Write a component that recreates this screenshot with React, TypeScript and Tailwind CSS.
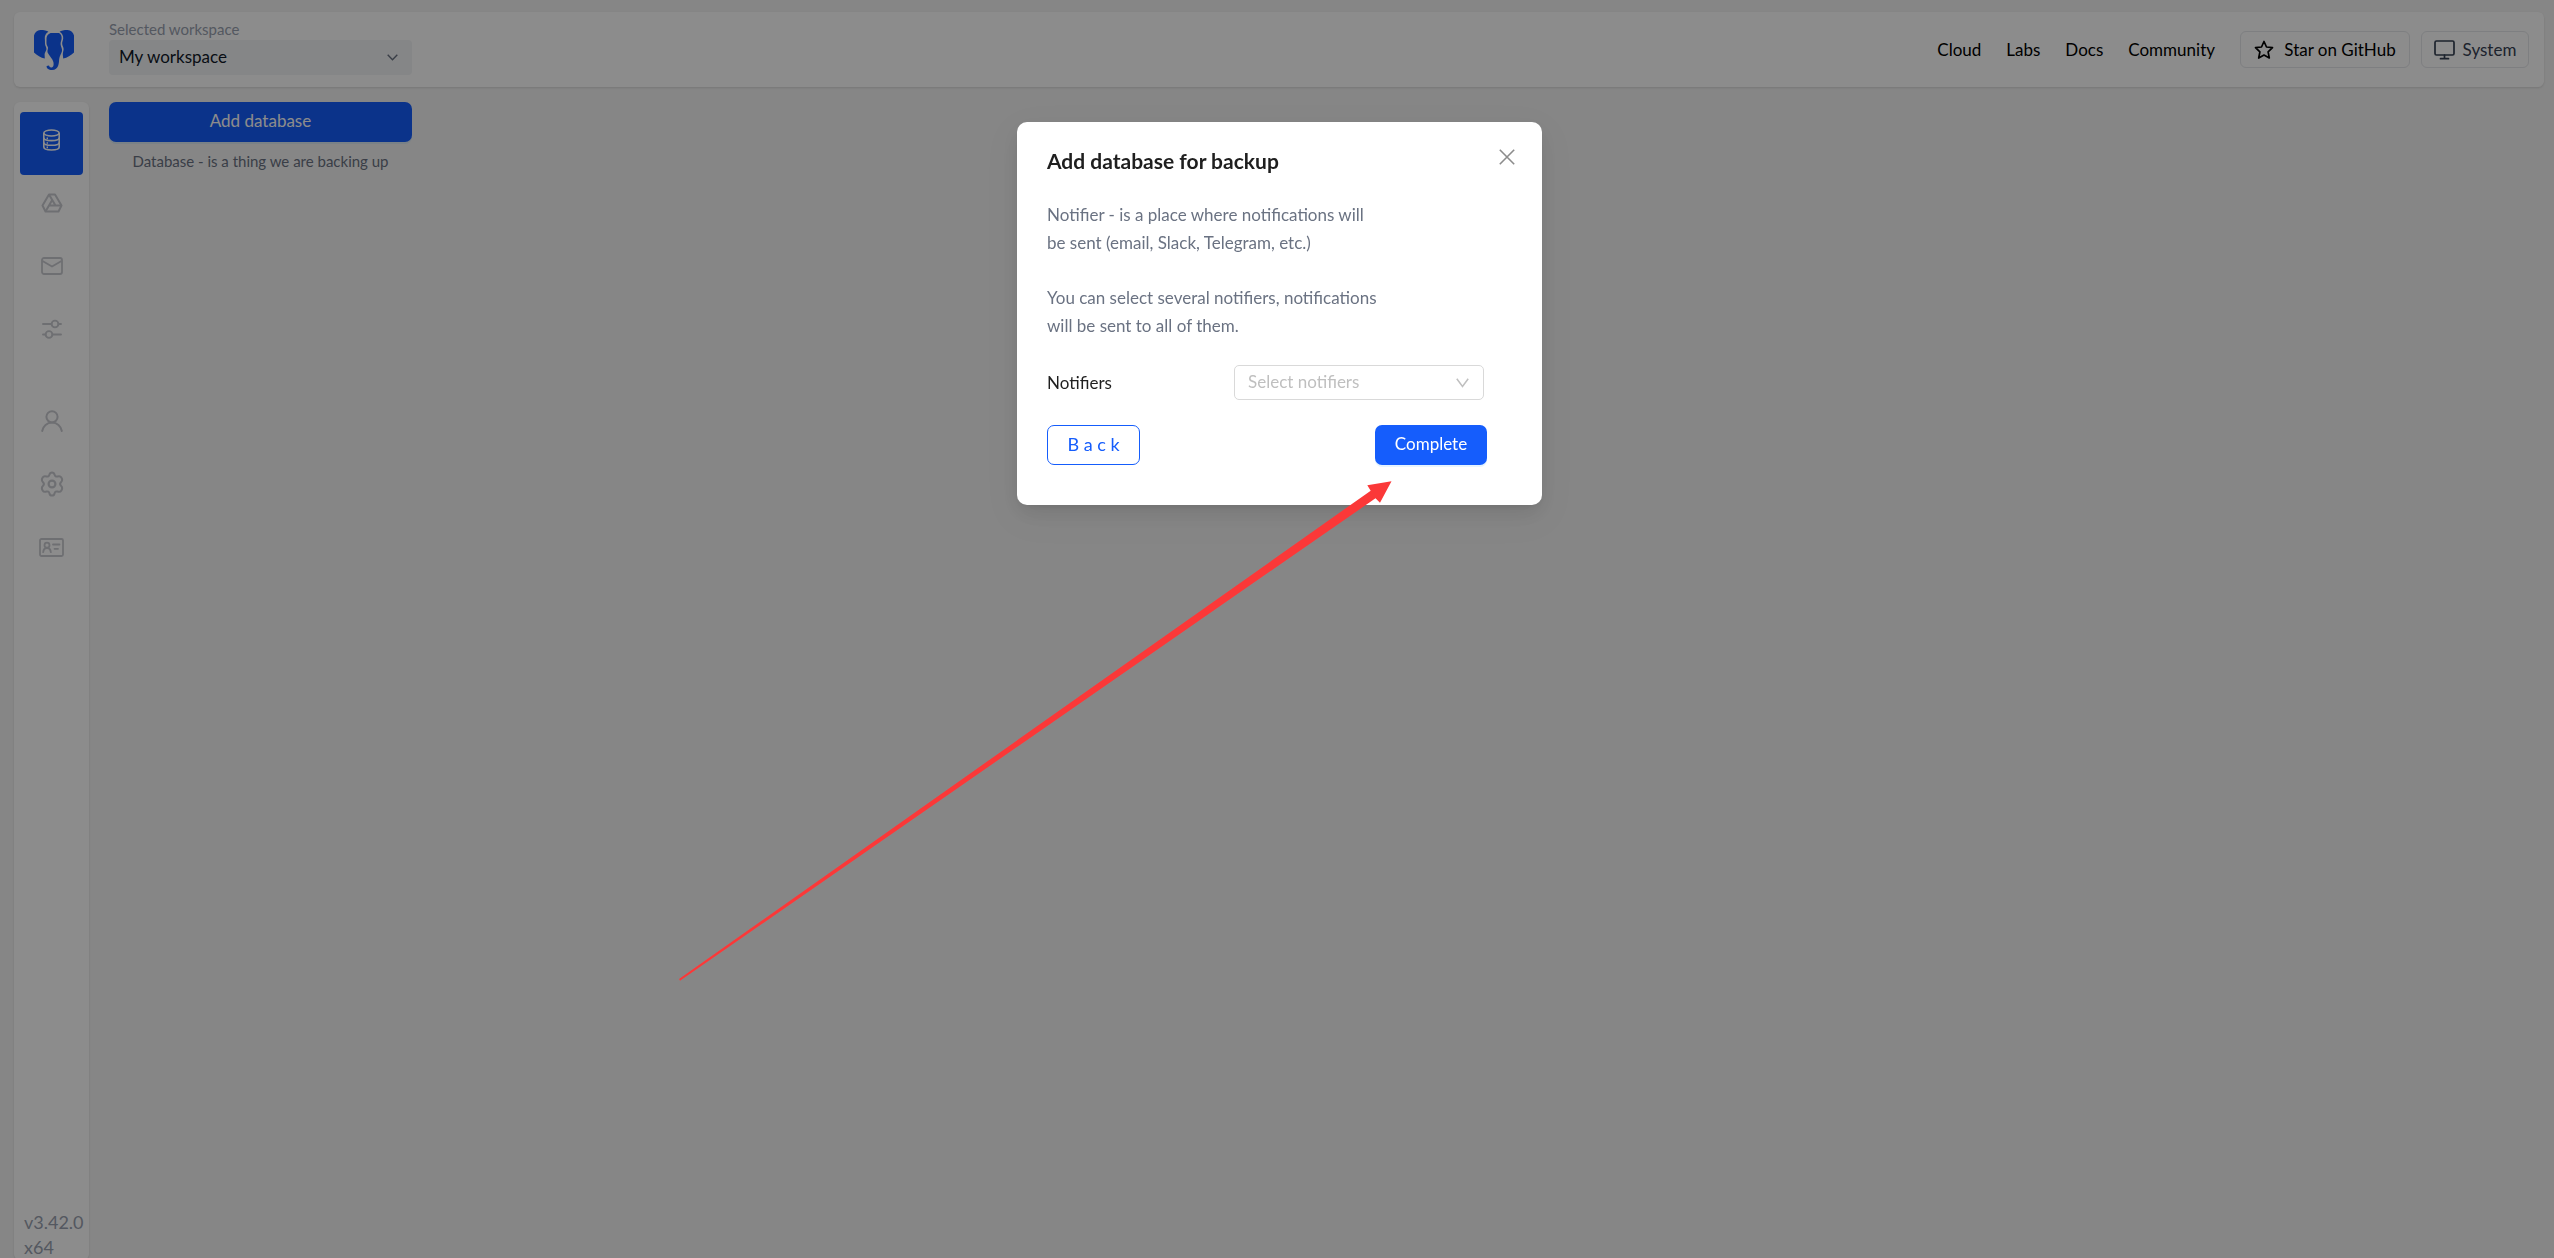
import { useState } from "react";

type IconProps = { className?: string };

function LogoIcon({ className }: IconProps) {
  return (
    <svg className={className} viewBox="0 0 40 40" fill="#155dfc">
      <path d="M6.500 0C10 0 13 .6 14.400 1.800C11.800 3.400 10.500 5.600 10.800 8.600C11 10.800 11 12 11 14C11.200 16 12.800 17.400 12.400 19.400C12 21.200 10.600 22.400 10.600 24.400L10.800 28.600C6.800 27.400 3 25.400 0 22.400V5.600C.6 2.400 3 .2 6.500 0Z" />
      <path d="M33.500 0C30 0 27 .6 25.600 1.800C28.200 3.400 29.500 5.600 29.200 8.600C29 10.800 28 12 28.200 14C28.400 16 29.800 17.400 29.600 19.400C29.400 21.200 28.800 22.400 28.800 24.400L29.200 28.600C33.200 27.400 37 25.400 40 22.400V5.600C39.400 2.400 37 .2 33.500 0Z" />
      <path d="M16.600 3H25C26.800 4.200 28 6 27.600 8.800C27.300 10.800 26.400 12.400 26.600 14.600C26.900 17 28.400 18.600 28 21C27.400 24 25.600 25.600 25.200 29C24.800 33 25 40 18 40C14.600 40 12.400 38.400 12.600 36L15 35.600C15.400 37.200 16.400 37.600 17.600 37.400C19.800 37 19.800 34.400 19.400 32C18.600 28.400 15 25.600 13.600 22.400C13 20.600 14.200 19.600 14 17.600C13.800 16 12.600 15.400 12.500 13.400C12.400 11.600 12.600 10.600 12.500 8.800C12.400 6 14 4.200 16.600 3Z" />
    </svg>
  );
}

function DatabaseIcon() {
  return (
    <svg width="21" height="22" viewBox="0 0 21 22" fill="none" stroke="white" strokeWidth="1.6">
      <ellipse cx="10.5" cy="4" rx="7.7" ry="3" />
      <path d="M2.8 4V18C2.8 19.8 6.2 21 10.5 21S18.2 19.8 18.2 18V4" />
      <path d="M2.8 8.7C2.8 10.4 6.2 11.6 10.5 11.6S18.2 10.4 18.2 8.7M2.8 13.4C2.8 15.1 6.2 16.3 10.5 16.3S18.2 15.1 18.2 13.4" />
      <path d="M5.6 9.4H7M5.6 14H7M5.6 18.4H7" />
    </svg>
  );
}

function DriveIcon() {
  return (
    <svg width="22" height="20" viewBox="0 0 22 20" fill="none" stroke="#c9cad0" strokeWidth="2" strokeLinejoin="round">
      <path d="M8 1.5H14L20.5 12.5L17.5 18.5H4.5L1.5 12.5Z" />
      <path d="M8 1.5L14.5 12.5M20.5 12.5H8.3M4.5 18.5L11.2 7" />
    </svg>
  );
}

function MailIcon() {
  return (
    <svg width="22" height="18" viewBox="0 0 22 18" fill="none" stroke="#c9cad0" strokeWidth="1.8" strokeLinejoin="round">
      <rect x="1" y="1" width="20" height="16" rx="2" />
      <path d="M1.5 4L11 9.5L20.5 4" />
    </svg>
  );
}

function SlidersIcon() {
  return (
    <svg width="20" height="20" viewBox="0 0 20 20" fill="none" stroke="#c9cad0" strokeWidth="1.9" strokeLinecap="round">
      <path d="M1 5H9.5M16.5 5H19M1 15.5H3.5M10.5 15.5H19" />
      <circle cx="13" cy="5" r="3.4" />
      <circle cx="7" cy="15.5" r="3.4" />
    </svg>
  );
}

function UserIcon() {
  return (
    <svg width="22" height="22" viewBox="0 0 22 22" fill="none" stroke="#c9cad0" strokeWidth="2" strokeLinecap="round">
      <circle cx="11" cy="6.8" r="5.6" />
      <path d="M1.2 21C2 16 6 12.6 11 12.6S20 16 20.8 21" />
    </svg>
  );
}

function GearIcon() {
  return (
    <svg width="24" height="26" viewBox="0 0 24 26" fill="none" stroke="#c9cad0" strokeWidth="2" strokeLinejoin="round">
      <path d="M12 1.4C13.8 1.4 14.3 2.4 14.6 3.8C14.9 5.2 16.2 5.9 17.5 5.5C19 5 20.4 4.900 21.4 6.6C22.900 9 22.400 9.900 21 11.200C19.900 12.300 19.900 13.700 21 14.800C22.400 16.100 22.900 17 21.400 19.400C20.400 21.100 19 21 17.500 20.500C16.200 20.100 14.900 20.800 14.600 22.200C14.300 23.600 13.800 24.600 12 24.600S9.700 23.600 9.400 22.200C9.100 20.800 7.800 20.100 6.500 20.500C5 21 3.600 21.100 2.600 19.400C1.100 17 1.600 16.100 3 14.800C4.100 13.700 4.100 12.300 3 11.200C1.600 9.900 1.100 9 2.600 6.600C3.600 4.900 5 5 6.500 5.500C7.800 5.900 9.100 5.200 9.400 3.800C9.700 2.400 10.200 1.400 12 1.400Z" />
      <circle cx="12" cy="13" r="3.400" strokeWidth="2.200" />
    </svg>
  );
}

function IdCardIcon() {
  return (
    <svg width="25" height="19" viewBox="0 0 25 19" fill="none" stroke="#c9cad0" strokeWidth="1.800" strokeLinecap="round">
      <rect x="1" y="1" width="23" height="17" rx="1.5" />
      <circle cx="8" cy="7.2" r="2.500" />
      <path d="M4.200 14.200C4.400 11.700 6 10 8 10S11.600 11.700 11.800 14.200M14 6.500H20.500M15.500 10.800H19" />
    </svg>
  );
}

const mainTabs = [
  { name: "Databases", icon: <DatabaseIcon />, active: true },
  { name: "Storages", icon: <DriveIcon /> },
  { name: "Notifiers", icon: <MailIcon /> },
  { name: "Settings", icon: <SlidersIcon /> },
];

const adminTabs = [
  { name: "Profile", icon: <UserIcon /> },
  { name: "Global settings", icon: <GearIcon /> },
  { name: "Users", icon: <IdCardIcon /> },
];

const links = ["Cloud", "Labs", "Docs", "Community"];

function TabButton({ tab }: { tab: { name: string; icon: React.ReactNode; active?: boolean } }) {
  return (
    <button
      aria-label={tab.name}
      className={`flex h-[63px] w-[63px] items-center justify-center rounded pb-[7px] ${
        tab.active ? "bg-[#155dfc]" : ""
      }`}
    >
      {tab.icon}
    </button>
  );
}

function Header() {
  return (
    <header className="flex h-[75px] items-center rounded-md bg-white pr-[15px] pl-5 shadow-sm">
      <a href="#" aria-label="Home">
        <LogoIcon className="h-10 w-10" />
      </a>
      <div className="ml-[35px] w-[303px]">
        <label htmlFor="workspace" className="block text-[15px] leading-[18px] text-gray-400">
          Selected workspace
        </label>
        <div className="relative mt-[2px] mb-1">
          <select
            id="workspace"
            className="block h-[35px] w-full appearance-none rounded bg-gray-100 px-[10px] pb-[2px] text-[17px] text-gray-900"
          >
            <option>My workspace</option>
          </select>
          <svg
            className="pointer-events-none absolute top-[14px] right-[14px]"
            width="11"
            height="7"
            viewBox="0 0 11 7"
            fill="none"
            stroke="#6a7282"
            strokeWidth="1.4"
          >
            <path d="M.7 .7L5.500 5.700L10.300 .7" />
          </svg>
        </div>
      </div>

      <nav className="ml-auto flex items-center gap-[25px] text-[17px] text-black">
        {links.map((link) => (
          <a key={link} href="#">
            {link}
          </a>
        ))}
        <a
          href="#"
          className="flex h-[37px] w-[170px] items-center justify-center gap-[10px] rounded-md border border-gray-200"
        >
          <svg width="20" height="20" viewBox="0 0 20 20" fill="none" stroke="black" strokeWidth="1.7" strokeLinejoin="round">
            <path d="M10 1.500L12.500 7L18.500 7.700L14.100 11.800L15.300 18L10 15L4.700 18L5.900 11.800L1.500 7.700L7.500 7Z" />
          </svg>
          Star on GitHub
        </a>
      </nav>
      <button className="ml-[11px] flex h-[37px] w-[108px] items-center justify-center gap-2 rounded-md border border-gray-200 text-[17px] text-[#364153]">
        <svg width="21" height="20" viewBox="0 0 21 20" fill="none" stroke="#364153" strokeWidth="1.7" strokeLinecap="round">
          <rect x="1" y="1" width="19" height="14" rx="1.500" />
          <path d="M10.500 15V18.500M6.500 18.700H14.500" />
        </svg>
        System
      </button>
    </header>
  );
}

function BackupModal({ onClose }: { onClose: () => void }) {
  return (
    <div className="fixed inset-0 flex items-start justify-center bg-black/45 pt-[122px] pl-[5px]">
      <div
        role="dialog"
        aria-labelledby="modal-title"
        className="relative w-[525px] rounded-[10px] bg-white px-[30px] pt-6 pb-10 shadow-[0_8px_20px_rgba(0,0,0,0.08),0_4px_8px_-5px_rgba(0,0,0,0.12),0_11px_35px_10px_rgba(0,0,0,0.05)]"
      >
        <h2 id="modal-title" className="text-[21px] leading-[30px] font-bold text-[#1f1f1f]">
          Add database for backup
        </h2>
        <button aria-label="Close" onClick={onClose} className="absolute top-[27px] right-[27px]">
          <svg width="16" height="16" viewBox="0 0 16 16" stroke="#8c8c8c" strokeWidth="1.600">
            <path d="M.8 .8L15.200 15.200M15.200 .8L.8 15.200" />
          </svg>
        </button>

        <div className="mt-[25px] flex flex-col gap-[27px] text-[17px] leading-[28px] text-gray-500">
          <p>
            Notifier - is a place where notifications will
            <br />
            be sent (email, Slack, Telegram, etc.)
          </p>
          <p>
            You can select several notifiers, notifications
            <br />
            will be sent to all of them.
          </p>
        </div>

        <div className="mt-[25px] flex items-center">
          <label htmlFor="notifiers" className="w-[187px] text-[17px] text-[#1f1f1f]">
            Notifiers
          </label>
          <div className="relative w-[250px]">
            <select
              id="notifiers"
              defaultValue=""
              className="block h-[35px] w-full appearance-none rounded-[5px] border border-[#d9d9d9] bg-white px-[13px] pb-[2px] text-[17px] text-[#bfbfbf]"
            >
              <option value="">Select notifiers</option>
            </select>
            <svg
              className="pointer-events-none absolute top-[13px] right-[15px]"
              width="13"
              height="10"
              viewBox="0 0 13 10"
              fill="none"
              stroke="#bfbfbf"
              strokeWidth="1.500"
            >
              <path d="M.8 .8L6.500 8.500L12.200 .8" />
            </svg>
          </div>
        </div>

        <div className="mt-[25px] flex w-[440px] justify-between">
          <button className="h-10 w-[93px] rounded-[7px] border border-[#155dfc] bg-white pb-[2px] text-[18px] text-[#155dfc]">
            B a c k
          </button>
          <button className="h-10 w-[112px] rounded-[7px] bg-[#155dfc] pb-[2px] text-[17px] text-white shadow-[0_2px_0_rgba(5,145,255,0.1)]">
            Complete
          </button>
        </div>

        {/* pointer to the last step button */}
        <svg
          className="pointer-events-none absolute top-[358px] left-[-338px] max-w-none"
          width="714"
          height="502"
          viewBox="0 0 714 502"
          fill="#fb3838"
        >
          <path d="M0 499L691.700 10.700L688.300 5.300L712.500 1.300L701 22.700L696.500 18.300L1 500.800Z" />
        </svg>
      </div>
    </div>
  );
}

export default function App() {
  const [isOpen, setIsOpen] = useState(true);

  return (
    <div className="h-screen overflow-hidden bg-[#f5f5f5] pt-3 pr-[10px] pl-[14px] font-['Lato',sans-serif]">
      <Header />

      <div className="mt-[15px] flex items-start">
        <aside className="flex h-[calc(100vh-100px)] w-[75px] flex-col rounded-md bg-white px-[6px] pt-[10px] shadow-sm">
          {mainTabs.map((tab) => (
            <TabButton key={tab.name} tab={tab} />
          ))}
          <div className="mt-[29px]">
            {adminTabs.map((tab) => (
              <TabButton key={tab.name} tab={tab} />
            ))}
          </div>
          <div className="mt-auto pl-1 text-[18px] leading-[25px] text-gray-400">
            v3.42.0
            <br />
            x64
          </div>
        </aside>

        <main className="ml-5 w-[303px] text-center">
          <button
            onClick={() => setIsOpen(true)}
            className="h-10 w-full rounded-[7px] bg-[#155dfc] pb-[2px] text-[17px] text-white shadow-[0_2px_0_rgba(5,145,255,0.1)]"
          >
            Add database
          </button>
          <p className="mt-[10px] text-[15px] leading-[18px] text-gray-500">
            Database - is a thing we are backing up
          </p>
        </main>
      </div>

      {isOpen && <BackupModal onClose={() => setIsOpen(false)} />}
    </div>
  );
}
